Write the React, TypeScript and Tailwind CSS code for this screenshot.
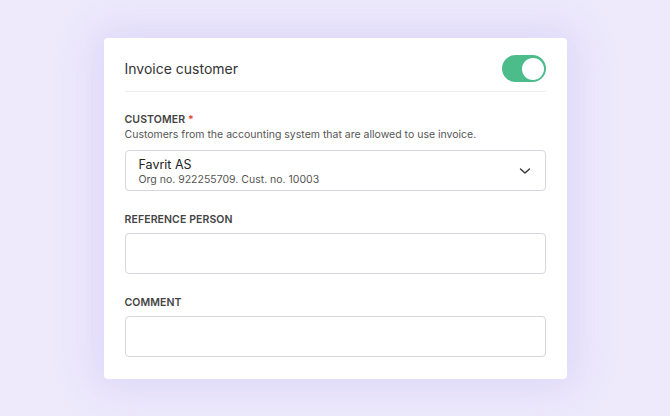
import React from "react";

export default function App() {
  return (
    <div className="w-[670px] h-[416px] bg-[#eeeafc] flex justify-center pt-[38px] font-['Inter',sans-serif]">
      <div className="w-[463px] h-[341px] bg-white rounded-[4px] shadow-[0_0_40px_10px_rgba(200,190,245,0.45)] px-[21px]">
        <div className="flex items-center justify-between pt-[17px] pb-[9px] border-b border-[#eeeef2]">
          <span className="text-[14px] text-[#333] leading-[27px]">Invoice customer</span>
          <div className="w-[44px] h-[27px] rounded-full bg-[#4cbc8a] flex items-center justify-end pr-[2px]">
            <div className="w-[22px] h-[22px] rounded-full bg-white"></div>
          </div>
        </div>
        <div className="pt-[21px]">
          <div className="text-[10.5px] font-semibold text-[#444] leading-[14px] tracking-[0.1px]">
            CUSTOMER <span className="text-[#e0453a]">*</span>
          </div>
          <div className="text-[10.5px] text-[#555] leading-[14px] mt-[1px]">
            Customers from the accounting system that are allowed to use invoice.
          </div>
          <div className="mt-[8px] h-[41px] border border-[#d6d6dc] rounded-[4px] flex items-center justify-between pl-[13px] pr-[14px]">
            <div className="flex flex-col pt-[2px]">
              <span className="text-[12.5px] text-[#222] leading-[16px]">Favrit AS</span>
              <span className="text-[10.5px] text-[#555] leading-[14px]">Org no. 922255709. Cust. no. 10003</span>
            </div>
            <svg width="12" height="8" viewBox="0 0 12 8" fill="none" stroke="#333" strokeWidth="1.4" strokeLinecap="round" strokeLinejoin="round">
              <path d="M1.5 2 L6 6 L10.5 2" />
            </svg>
          </div>
          <div className="mt-[22px] text-[10.5px] font-semibold text-[#444] leading-[14px] tracking-[0.1px]">REFERENCE PERSON</div>
          <div className="mt-[6px] h-[41px] border border-[#d6d6dc] rounded-[4px]"></div>
          <div className="mt-[22px] text-[10.5px] font-semibold text-[#444] leading-[14px] tracking-[0.1px]">COMMENT</div>
          <div className="mt-[6px] h-[41px] border border-[#d6d6dc] rounded-[4px]"></div>
        </div>
      </div>
    </div>
  );
}
